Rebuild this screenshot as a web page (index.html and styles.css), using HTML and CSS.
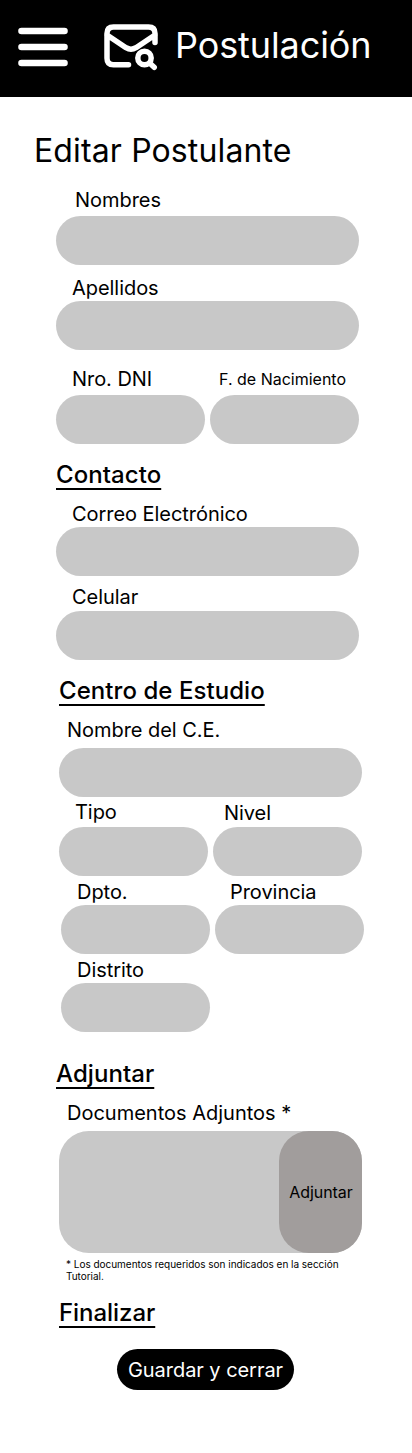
FILE: index.html
```html
<!DOCTYPE html>
<html lang="es">
<head>
<meta charset="utf-8">
<title>Editar Postulante</title>
<link rel="stylesheet" href="styles.css">
</head>
<body>
<header class="topbar">
  <svg class="menu-icon" viewBox="0 0 50 40" fill="none" stroke="#fff" stroke-width="6.6" stroke-linecap="round"><path d="M3.500 4H46.500M3.500 20H46.500M3.500 36H46.500"/></svg>
  <svg class="mail-icon" viewBox="0 0 56 48" fill="none" stroke="#fff" stroke-width="5.500" stroke-linecap="round" stroke-linejoin="round">
    <path d="M25.500 41.700H10.500Q4 41.700 4 35.200V10.500Q4 4 10.500 4H45.500Q52 4 52 10.500V19.500M4 12L23 24.700Q28 27.700 33 24.700L52 12"/>
    <circle cx="41.500" cy="35" r="6.700"/><path d="M46.800 40.300L51.200 44.300"/>
  </svg>
  <span class="brand">Postulación</span>
</header>
<main class="page">
  <h1 class="title">Editar Postulante</h1>
  <form class="form">
    <section class="group personal">
      <div class="field"><label class="label names">Nombres</label><div class="input"></div></div>
      <div class="field surnames"><label class="label">Apellidos</label><div class="input"></div></div>
      <div class="pair ids">
        <div class="field"><label class="label">Nro. DNI</label><div class="input"></div></div>
        <div class="field"><label class="label small">F. de Nacimiento</label><div class="input"></div></div>
      </div>
    </section>
    <section class="group contact">
      <h2 class="heading">Contacto</h2>
      <div class="field email"><label class="label">Correo Electrónico</label><div class="input"></div></div>
      <div class="field phone"><label class="label">Celular</label><div class="input"></div></div>
    </section>
    <section class="group school">
      <h2 class="heading">Centro de Estudio</h2>
      <div class="field center-name"><label class="label">Nombre del C.E.</label><div class="input"></div></div>
      <div class="pair kind">
        <div class="field"><label class="label type">Tipo</label><div class="input"></div></div>
        <div class="field"><label class="label level">Nivel</label><div class="input"></div></div>
      </div>
      <div class="pair place">
        <div class="field"><label class="label">Dpto.</label><div class="input"></div></div>
        <div class="field"><label class="label province">Provincia</label><div class="input"></div></div>
        <div class="field"><label class="label">Distrito</label><div class="input"></div></div>
      </div>
    </section>
    <section class="group attach">
      <h2 class="heading">Adjuntar</h2>
      <div class="field docs"><label class="label">Documentos Adjuntos *</label>
        <div class="dropzone"><button class="attach-button" type="button">Adjuntar</button></div>
      </div>
      <p class="note">* Los documentos requeridos son indicados en la sección Tutorial.</p>
    </section>
    <section class="group finish">
      <h2 class="heading">Finalizar</h2>
      <button class="save" type="button">Guardar y cerrar</button>
    </section>
  </form>
</main>
</body>
</html>
```
FILE: styles.css
```css
* { box-sizing: border-box; margin: 0; padding: 0; }
body { background: #fff; color: #000; font-family: Inter, sans-serif; font-weight: 400; letter-spacing: -0.05px; }
button { border: 0; font: inherit; letter-spacing: inherit; color: inherit; white-space: nowrap; }
.topbar { display: flex; height: 97px; padding-left: 18px; background: #000; color: #fff; }
.menu-icon { width: 50px; height: 40px; margin-top: 27px; }
.mail-icon { width: 56px; height: 48px; margin: 23px 0 0 35px; }
.brand { margin: 23px 0 0 16px; font-size: 36px; font-weight: 400; line-height: 44px; letter-spacing: -0.1px; }
.page { height: 1356px; padding-top: 34px; }
.title { margin-left: 34px; font-size: 32px; font-weight: 400; line-height: 39px; letter-spacing: 0.13px; }
.form { padding-top: 18px; }
.group { width: 303px; margin-left: 56px; }
.field { display: flex; flex-direction: column; }
.label { height: 24px; padding-left: 16px; font-size: 20px; line-height: 24px; white-space: nowrap; }
.input { height: 49px; border-radius: 24.5px; background: #c8c8c8; }
.pair { display: grid; grid-template-columns: 149px 149px; column-gap: 5px; }
.heading { font-size: 24px; font-weight: 500; line-height: 29px; letter-spacing: 0.06px; text-decoration: underline; text-decoration-thickness: 1.5px; text-underline-offset: 4.5px; }
.names { height: 28px; padding-left: 19px; }
.surnames { margin-top: 11px; }
.surnames .label { height: 25px; }
.ids { margin-top: 17px; }
.ids .label { height: 28px; }
.ids .small { padding-left: 9px; font-size: 16px; letter-spacing: 0; }
.contact { margin-top: 16px; }
.email { margin-top: 13px; }
.email .label { height: 25px; }
.phone { margin-top: 9px; }
.phone .label { height: 26px; }
.school { margin: 16px 0 0 59px; }
.center-name { margin-top: 13px; }
.center-name .label { height: 30px; padding-left: 8px; }
.kind { margin-top: 3px; }
.kind .label { height: 27px; }
.level { padding: 1px 0 0 11px; }
.place { margin: 4px 0 0 2px; row-gap: 4px; }
.place .label { height: 25px; }
.place .province { padding-left: 15px; }
.attach { margin-top: 27px; }
.docs { margin: 13px 0 0 3px; width: 303px; }
.docs .label { height: 30px; padding-left: 8px; letter-spacing: 0; }
.dropzone { display: flex; justify-content: flex-end; height: 122px; border-radius: 30px; background: #c8c8c8; }
.attach-button { width: 83px; padding-left: 1px; border-radius: 30px; background: #a19d9c; font-size: 16px; }
.note { width: 290px; margin: 5px 0 0 10px; font-size: 10px; line-height: 12px; letter-spacing: -0.02px; }
.finish { margin: 16px 0 0 59px; }
.finish .heading { letter-spacing: -0.05px; }
.save { display: block; width: 177px; height: 41px; margin: 22px 0 0 58px; border-radius: 20.5px; background: #000; color: #fff; font-size: 20px; }
```
